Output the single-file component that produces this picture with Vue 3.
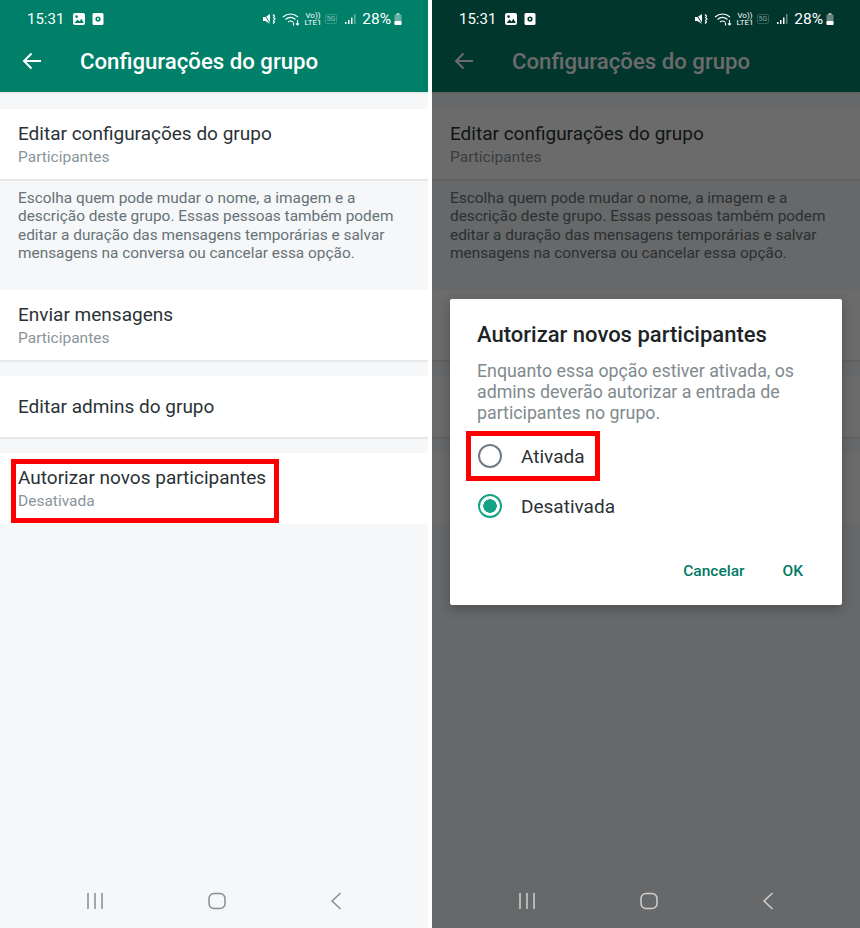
<script setup>
const screens = [{ id: 'left', dialog: false }, { id: 'right', dialog: true }]

const firstRow = { title: 'Editar configurações do grupo', sub: 'Participantes' }
const description = [
  'Escolha quem pode mudar o nome, a imagem e a',
  'descrição deste grupo. Essas pessoas também podem',
  'editar a duração das mensagens temporárias e salvar',
  'mensagens na conversa ou cancelar essa opção.'
]
const dialogText = [
  'Enquanto essa opção estiver ativada, os',
  'admins deverão autorizar a entrada de',
  'participantes no grupo.'
]
</script>

<template>
  <div class="page">
    <div v-for="screen in screens" :key="screen.id" class="phone">
      <header class="app-header">
        <div class="status-bar">
          <span class="clock">15:31</span>
          <svg class="st-icon" width="14" height="14" viewBox="0 0 14 14">
            <rect x="1" y="1" width="12" height="12" rx="2" fill="#fff" />
            <circle cx="4.6" cy="4.6" r="1.3" :fill="screen.dialog ? '#00362c' : '#008069'" />
            <path d="M2.5 11l3-3.5 2 2 2-2.8 2.2 4.3z" :fill="screen.dialog ? '#00362c' : '#008069'" />
          </svg>
          <svg class="st-icon" width="12" height="14" viewBox="0 0 12 14">
            <rect x="0.5" y="1" width="11" height="12" rx="1.5" fill="#fff" />
            <circle cx="6" cy="7" r="2.6" :fill="screen.dialog ? '#00362c' : '#008069'" />
            <circle cx="6" cy="7" r="1" fill="#fff" />
          </svg>
          <div class="status-right">
            <svg class="mute" width="15" height="14" viewBox="0 0 15 14">
              <path d="M1 5h2.500L8 2v10L3.500 9H1z" fill="#fff" />
              <path d="M1.500 1l7.500 12" :stroke="screen.dialog ? '#00362c' : '#008069'" stroke-width="1" />
              <path d="M11 2.500l1.500 1.500-1 1.500 1.500 1.500-1.500 1.500 1 1.500-1.500 1.500" fill="none" stroke="#fff" stroke-width="1.200" />
            </svg>
            <svg width="19" height="14" viewBox="0 0 19 14" fill="none" stroke="#fff" stroke-width="1.100">
              <path d="M1 5c4.500-4 10.500-4 15 0" />
              <path d="M3.500 7.500c3-2.600 7-2.600 10 0" />
              <path d="M6 10c1.600-1.300 3.400-1.300 5 0" />
              <path d="M11.500 10.500v3M15.500 8v4.500M14 11.500l1.500 1.500 1.500-1.500" />
            </svg>
            <div class="volte"><span>Vo))</span><span>LTE1</span></div>
            <span class="five-g">5G</span>
            <svg class="signal" width="14" height="12" viewBox="0 0 14 12">
              <rect x="1" y="9" width="1.500" height="2" fill="#fff" />
              <rect x="4" y="7" width="1.500" height="4" fill="#fff" />
              <rect x="7" y="4.500" width="1.500" height="6.500" fill="#fff" />
              <rect x="10" y="1" width="1.500" height="10" fill="#fff" opacity="0.4" />
            </svg>
            <span class="battery-text">28%</span>
            <svg width="8" height="14" viewBox="0 0 8 14">
              <rect x="2.500" y="1" width="3" height="2" fill="#fff" opacity="0.6" />
              <rect x="0.500" y="2.500" width="7" height="10.500" rx="1" fill="#fff" opacity="0.4" />
              <rect x="0.500" y="9" width="7" height="4" rx="1" fill="#fff" />
            </svg>
          </div>
        </div>
        <div class="toolbar">
          <svg width="20" height="18" viewBox="0 0 20 18" fill="none" stroke="#fff" stroke-width="2">
            <path d="M19 9H2M9.500 1.500L2 9l7.500 7.500" />
          </svg>
          <h1 class="toolbar-title">Configurações do grupo</h1>
        </div>
      </header>

      <main class="settings">
        <section class="row row-large">
          <div class="row-title">{{ firstRow.title }}</div>
          <div class="row-sub">{{ firstRow.sub }}</div>
        </section>
        <div class="description">
          <div v-for="line in description" :key="line">{{ line }}</div>
        </div>
        <section class="row row-large">
          <div class="row-title">Enviar mensagens</div>
          <div class="row-sub">Participantes</div>
        </section>
        <section class="row row-plain">
          <div class="row-title">Editar admins do grupo</div>
        </section>
        <section class="row row-large row-last">
          <div class="row-title">Autorizar novos participantes</div>
          <div class="row-sub">Desativada</div>
        </section>
      </main>

      <nav class="nav-bar" :class="{ 'nav-bright': screen.dialog }">
        <svg width="18" height="18" viewBox="0 0 18 18" stroke="currentColor" stroke-width="1.500">
          <path d="M2 1v16M9 1v16M16 1v16" />
        </svg>
        <svg width="18" height="18" viewBox="0 0 18 18" fill="none" stroke="currentColor" stroke-width="1.500">
          <rect x="1" y="1.500" width="16" height="15" rx="5" />
        </svg>
        <svg width="12" height="18" viewBox="0 0 12 18" fill="none" stroke="currentColor" stroke-width="1.500">
          <path d="M10.500 1L2 9l8.500 8" />
        </svg>
      </nav>

      <div v-if="!screen.dialog" class="highlight highlight-row"></div>

      <div v-if="screen.dialog" class="overlay">
        <div class="dialog">
          <h2 class="dialog-title">Autorizar novos participantes</h2>
          <div class="dialog-text">
            <div v-for="line in dialogText" :key="line">{{ line }}</div>
          </div>
          <div class="options">
            <div class="option">
              <span class="radio"></span>
              <span class="option-label">Ativada</span>
              <div class="highlight highlight-option"></div>
            </div>
            <div class="option">
              <span class="radio radio-on"></span>
              <span class="option-label">Desativada</span>
            </div>
          </div>
          <div class="dialog-actions">
            <span class="action">Cancelar</span>
            <span class="action">OK</span>
          </div>
        </div>
      </div>
    </div>
  </div>
</template>

<style scoped>
.page {
  display: flex;
  gap: 4px;
  width: 860px;
  height: 928px;
  background: #fff;
  font-family: Roboto, "Liberation Sans", sans-serif;
}

.phone {
  position: relative;
  display: flex;
  flex-direction: column;
  width: 428px;
  height: 928px;
  overflow: hidden;
  background: #f6f7f9;
}

.app-header {
  flex: none;
  height: 92px;
  background: #008069;
  box-shadow: 0 1px 2px rgba(0, 0, 0, 0.1);
  color: #fff;
}

.status-bar {
  position: relative;
  z-index: 2;
  display: flex;
  align-items: center;
  gap: 6px;
  height: 37px;
  padding: 0 26px 0 27px;
}

.clock {
  margin-right: 2px;
  font-size: 15px;
}

.status-right {
  display: flex;
  align-items: center;
  gap: 3px;
  margin-left: auto;
}

.mute {
  margin-right: 2px;
}

.signal {
  margin: 0 1px 0 4px;
}

.volte {
  display: flex;
  flex-direction: column;
  font-size: 8px;
  line-height: 7px;
  text-align: center;
}

.five-g {
  padding: 0 1px;
  border: 1px solid rgba(255, 255, 255, 0.4);
  border-radius: 2px;
  font-size: 7px;
  line-height: 8px;
  opacity: 0.5;
}

.battery-text {
  font-size: 15.500px;
}

.toolbar {
  display: flex;
  align-items: center;
  gap: 38px;
  height: 48px;
  padding-left: 22px;
}

.toolbar-title {
  margin: 0;
  font-size: 22.200px;
  font-weight: 500;
}

.settings {
  flex: 1;
  padding-top: 17px;
}

.row {
  box-sizing: border-box;
  display: flex;
  flex-direction: column;
  justify-content: center;
  padding: 0 18px;
  background: #fff;
  border-bottom: 2px solid #e6e8ea;
}

.row-large {
  height: 72px;
  padding-top: 1px;
}

.row-plain {
  height: 63px;
  margin-top: 14px;
}

.row-last {
  height: 71px;
  margin-top: 14px;
  border-bottom: 0;
  padding-top: 0;
}

.row-title {
  font-size: 19px;
  line-height: 24px;
  color: #2a3236;
}

.row-sub {
  margin-top: 1px;
  font-size: 15.500px;
  line-height: 20px;
  color: #8a9499;
}

.description {
  box-sizing: border-box;
  height: 109px;
  padding: 8px 18px 0;
  font-size: 15.400px;
  line-height: 18.300px;
  color: #667277;
}

.nav-bar {
  position: relative;
  z-index: 2;
  display: flex;
  justify-content: center;
  align-items: center;
  gap: 104px;
  flex: none;
  box-sizing: border-box;
  height: 54px;
  color: #8a8c90;
}

.nav-bright {
  color: #d0d0d0;
}

.overlay {
  position: absolute;
  inset: 0;
  display: flex;
  justify-content: center;
  align-items: flex-start;
  padding-top: 299px;
  background: rgba(0, 0, 0, 0.58);
}

.dialog {
  box-sizing: border-box;
  width: 392px;
  height: 306px;
  padding: 23px 27px 0;
  border-radius: 2px;
  background: #fff;
  box-shadow: 0 4px 12px rgba(0, 0, 0, 0.25);
}

.dialog-title {
  margin: 0;
  font-size: 22px;
  font-weight: 500;
  line-height: 26px;
  color: #1d2427;
}

.dialog-text {
  margin-top: 12px;
  font-size: 17.800px;
  line-height: 21px;
  color: #7f8a8e;
  white-space: nowrap;
}

.options {
  margin-top: 8px;
}

.option {
  position: relative;
  display: flex;
  align-items: center;
  gap: 19px;
  height: 50px;
}

.radio {
  box-sizing: border-box;
  flex: none;
  width: 24px;
  height: 24px;
  margin-left: 1px;
  border: 2px solid #6f7b86;
  border-radius: 50%;
}

.radio-on {
  border-color: #14a384;
  background: radial-gradient(circle, #14a384 0 6.500px, transparent 7px);
}

.option-label {
  font-size: 19px;
  color: #2a3236;
}

.dialog-actions {
  display: flex;
  justify-content: flex-end;
  gap: 38px;
  margin-top: 31px;
  margin-right: 12px;
}

.action {
  font-size: 15.500px;
  font-weight: 500;
  color: #017a64;
}

.highlight {
  position: absolute;
  box-sizing: border-box;
  border: 5px solid #f00;
}

.highlight-row {
  top: 459px;
  left: 11px;
  width: 268px;
  height: 64px;
}

.highlight-option {
  top: 0;
  left: -11px;
  width: 134px;
  height: 50px;
}
</style>
